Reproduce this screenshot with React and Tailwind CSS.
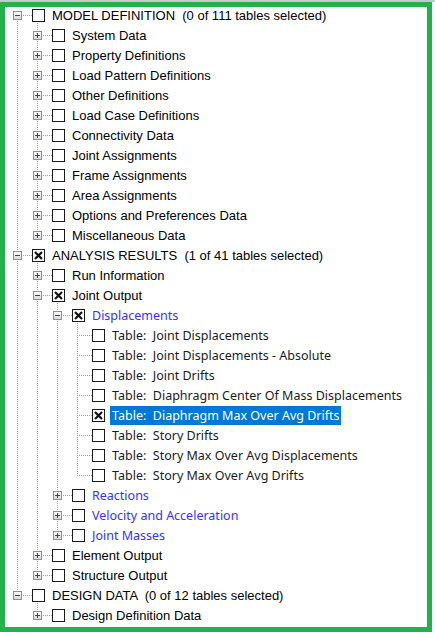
import React from "react";

// tree model: open nodes show their children, "more" marks collapsed nodes with a [+] box
const TREE = [
  {
    label: "MODEL DEFINITION  (0 of 111 tables selected)",
    open: true,
    children: [
      "System Data",
      "Property Definitions",
      "Load Pattern Definitions",
      "Other Definitions",
      "Load Case Definitions",
      "Connectivity Data",
      "Joint Assignments",
      "Frame Assignments",
      "Area Assignments",
      "Options and Preferences Data",
      "Miscellaneous Data",
    ].map((label) => ({ label, more: true })),
  },
  {
    label: "ANALYSIS RESULTS  (1 of 41 tables selected)",
    open: true,
    checked: true,
    children: [
      { label: "Run Information", more: true },
      {
        label: "Joint Output",
        open: true,
        checked: true,
        children: [
          {
            label: "Displacements",
            open: true,
            checked: true,
            blue: true,
            children: [
              { label: "Table:  Joint Displacements", table: true },
              { label: "Table:  Joint Displacements - Absolute", table: true },
              { label: "Table:  Joint Drifts", table: true },
              { label: "Table:  Diaphragm Center Of Mass Displacements", table: true },
              { label: "Table:  Diaphragm Max Over Avg Drifts", table: true, checked: true, selected: true },
              { label: "Table:  Story Drifts", table: true },
              { label: "Table:  Story Max Over Avg Displacements", table: true },
              { label: "Table:  Story Max Over Avg Drifts", table: true },
            ],
          },
          { label: "Reactions", more: true, blue: true },
          { label: "Velocity and Acceleration", more: true, blue: true },
          { label: "Joint Masses", more: true, blue: true },
        ],
      },
      { label: "Element Output", more: true },
      { label: "Structure Output", more: true },
    ],
  },
  {
    label: "DESIGN DATA  (0 of 12 tables selected)",
    open: true,
    children: [{ label: "Design Definition Data", more: true }],
  },
];

function flatten(nodes, depth, guides, out) {
  nodes.forEach((node, i) => {
    const hasNext = i < nodes.length - 1;
    out.push({ node, depth, guides, hasNext, first: depth === 0 && i === 0 });
    if (node.open && node.children) flatten(node.children, depth + 1, [...guides, hasNext], out);
  });
  return out;
}

const DOT = "#a0a0a0";

function TreeGlyphs({ node, depth, guides, hasNext, first }) {
  const x0 = 20 * depth;
  const cx = x0 + 10.5;
  const expandable = node.open || node.more;
  return (
    <svg width={39 + x0} height="20" className="shrink-0" shapeRendering="crispEdges">
      <defs>
        <linearGradient id="btn" x1="0" y1="0" x2="0" y2="1">
          <stop offset="0" stopColor="#ffffff" />
          <stop offset="1" stopColor="#d6d6d6" />
        </linearGradient>
      </defs>
      {guides.map((g, k) =>
        g ? <line key={k} x1={20 * k + 10.5} y1="0" x2={20 * k + 10.5} y2="20" stroke={DOT} strokeDasharray="1 1" /> : null
      )}
      {!first && <line x1={cx} y1="0" x2={cx} y2="10" stroke={DOT} strokeDasharray="1 1" />}
      {hasNext && <line x1={cx} y1="10" x2={cx} y2="20" stroke={DOT} strokeDasharray="1 1" />}
      <line x1={x0 + 10} y1="10.5" x2={x0 + 25} y2="10.5" stroke={DOT} strokeDasharray="1 1" />
      {node.open && <line x1={x0 + 30.5} y1="18" x2={x0 + 30.5} y2="20" stroke={DOT} strokeDasharray="1 1" />}
      {expandable && (
        <g>
          <rect x={x0 + 6.5} y="6.5" width="8" height="8" fill="url(#btn)" stroke="#8e8f8f" />
          <line x1={x0 + 8} y1="10.5" x2={x0 + 13} y2="10.5" stroke="#2a4488" />
          {node.more && <line x1={cx} y1="8" x2={cx} y2="13" stroke="#2a4488" />}
        </g>
      )}
      <rect x={x0 + 25.5} y="4.5" width="12" height="12" fill="#fff" stroke="#1a1a1a" />
      {node.checked && (
        <g stroke="#111" strokeWidth="2.2" shapeRendering="auto">
          <line x1={x0 + 28} y1="7" x2={x0 + 35} y2="14" />
          <line x1={x0 + 35} y1="7" x2={x0 + 28} y2="14" />
        </g>
      )}
    </svg>
  );
}

function Row(props) {
  const { node } = props;
  const alt = node.table || node.blue;
  const font = alt
    ? "font-['Noto_Sans',sans-serif] text-[12.5px]"
    : "font-['Liberation_Sans',Arial,sans-serif] text-[13px]";
  const color = node.selected
    ? "bg-[#0078d7] text-white"
    : node.blue
    ? "text-[#3434ff]"
    : node.table
    ? "text-[#1c1a22]"
    : "text-black";
  return (
    <div className="flex h-[20px] items-center">
      <TreeGlyphs {...props} />
      <span className={`ml-[4px] px-[2px] leading-[19px] whitespace-pre ${font} ${color}`}>{node.label}</span>
    </div>
  );
}

export default function App() {
  const rows = flatten(TREE, 0, [], []);
  return (
    <div className="w-[435px] h-[635px] bg-white border-t-2 border-[#c8c8c8]">
      <div className="w-[432px] h-[630px] border-[5px] border-[#22b14c] overflow-hidden">
        <div className="-mt-[2px] pl-[2px]">
          {rows.map((r, i) => (
            <Row key={i} {...r} />
          ))}
        </div>
      </div>
    </div>
  );
}
